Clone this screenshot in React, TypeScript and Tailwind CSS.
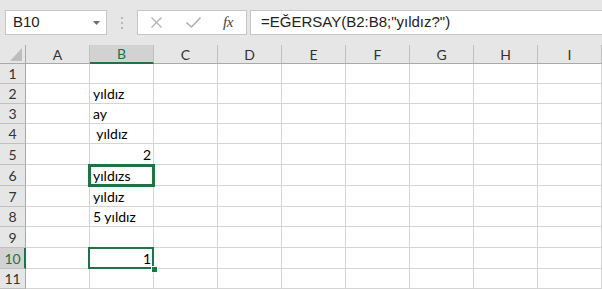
import React from 'react';

const cols = ['A', 'B', 'C', 'D', 'E', 'F', 'G', 'H', 'I'];

// heights include the bottom gridline
const rowHeights = [
  'h-[20px]', 'h-[20px]', 'h-[20px]', 'h-[20px]', 'h-[21px]', 'h-[21px]',
  'h-[21px]', 'h-[20px]', 'h-[21px]', 'h-[21px]', 'h-[20px]',
];

const cells: Record<number, { text: string; right?: boolean }> = {
  2: { text: 'yıldız' },
  3: { text: 'ay' },
  4: { text: ' yıldız' },
  5: { text: '2', right: true },
  6: { text: 'yıldızs' },
  7: { text: 'yıldız' },
  8: { text: '5 yıldız' },
  10: { text: '1', right: true },
};

function FormulaBar() {
  return (
    <div className="flex h-[25px] mt-[10px] font-['Liberation_Sans',Arial,sans-serif] text-[15px] text-[#222]">
      <div className="ml-[5px] w-[102px] bg-white border border-[#c6c6c6] flex items-center justify-between pl-[7px] pr-[6px]">
        <span>B10</span>
        <svg width="7" height="4" viewBox="0 0 7 4">
          <polygon points="0,0 7,0 3.5,4" fill="#6f6f6f" />
        </svg>
      </div>
      <div className="w-[30px] flex flex-col items-center justify-center gap-[3px]">
        <div className="w-[2px] h-[2px] bg-[#b8b8b8]" />
        <div className="w-[2px] h-[2px] bg-[#b8b8b8]" />
        <div className="w-[2px] h-[2px] bg-[#b8b8b8]" />
      </div>
      <div className="w-[110px] bg-white border border-[#c6c6c6] flex items-center">
        <svg className="ml-[13px]" width="11" height="11" viewBox="0 0 11 11">
          <path d="M0.5 0.5 L10.5 10.5 M10.5 0.5 L0.5 10.5" stroke="#b3b3b3" strokeWidth="1.3" fill="none" />
        </svg>
        <svg className="ml-[24px]" width="15" height="11" viewBox="0 0 15 11">
          <path d="M0.5 5.5 L5.5 10 L14.5 0.5" stroke="#b3b3b3" strokeWidth="1.6" fill="none" />
        </svg>
        <span className="ml-[22px] font-['Liberation_Serif',serif] italic text-[15px] text-[#444] tracking-[-0.5px]">
          fx
        </span>
      </div>
      <div className="ml-[3px] flex-1 bg-white border border-r-0 border-[#c6c6c6] flex items-center pl-[10px] whitespace-pre">
        =EĞERSAY(B2:B8;"yıldız?")
      </div>
    </div>
  );
}

function Sheet() {
  return (
    <div className="mt-[10px] font-['Lato',Calibri,sans-serif] text-[14px]">
      <div className="flex h-[19px] bg-[#e6e6e6] text-[#333]">
        <div className="w-[26px] border-r border-b border-[#a9a9a9] relative">
          <svg className="absolute right-[3px] bottom-[2px]" width="12" height="13" viewBox="0 0 12 13">
            <polygon points="12,0 12,13 0,13" fill="#bdbdbd" />
          </svg>
        </div>
        {cols.map((c) =>
          c === 'B' ? (
            <div
              key={c}
              className="w-[64px] bg-[#d2d2d2] border-r border-r-[#c0c0c0] border-b-2 border-b-[#217346] flex items-center justify-center text-[#217346]"
            >
              {c}
            </div>
          ) : (
            <div
              key={c}
              className="w-[64px] border-r border-r-[#c0c0c0] border-b border-b-[#a9a9a9] flex items-center justify-center"
            >
              {c}
            </div>
          )
        )}
      </div>
      {rowHeights.map((h, i) => {
        const r = i + 1;
        const sel = r === 10;
        const cell = cells[r];
        return (
          <div key={r} className={`flex bg-white ${h}`}>
            <div
              className={
                sel
                  ? 'w-[26px] bg-[#d2d2d2] border-r-2 border-r-[#217346] border-b border-b-[#c0c0c0] flex items-center justify-center text-[#217346] pl-[1px]'
                  : 'w-[26px] bg-[#e6e6e6] border-r border-r-[#a9a9a9] border-b border-b-[#c0c0c0] flex items-center justify-center text-[#333]'
              }
            >
              {r}
            </div>
            {cols.map((c) => (
              <div
                key={c}
                className={`w-[64px] border-r border-b border-[#d4d4d4] flex items-end whitespace-pre text-black ${
                  c === 'B' && cell?.right ? 'justify-end pr-[2px]' : 'pl-[3px]'
                }`}
              >
                {c === 'B' && cell ? <span className="leading-[19px]">{cell.text}</span> : null}
              </div>
            ))}
          </div>
        );
      })}
    </div>
  );
}

export default function App() {
  return (
    <div className="relative w-[602px] h-[289px] bg-[#e6e6e6] overflow-hidden">
      <FormulaBar />
      <Sheet />
      {/* thick box border on B6 */}
      <div className="absolute left-[88px] top-[164px] w-[67px] h-[23px] border-[3px] border-[#217346]" />
      {/* active cell B10 */}
      <div className="absolute left-[88px] top-[247px] w-[66px] h-[22px] border-2 border-[#217346]" />
      <div className="absolute left-[151px] top-[266px] w-[5px] h-[5px] bg-[#217346] border border-white box-content" />
    </div>
  );
}
